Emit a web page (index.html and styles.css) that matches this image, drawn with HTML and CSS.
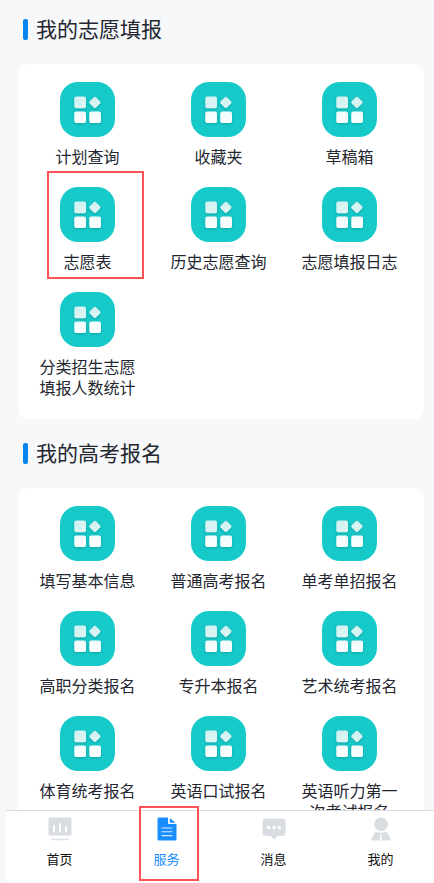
FILE: index.html
```
<!DOCTYPE html>
<html lang="zh-CN">
<head>
<meta charset="utf-8">
<meta name="viewport" content="width=device-width, initial-scale=1">
<title>服务</title>
<link rel="stylesheet" href="styles.css">
</head>
<body>
<svg class="defs" aria-hidden="true">
  <defs>
    <linearGradient id="soft" x1="0" y1="0" x2="1" y2="1">
      <stop offset="0" stop-color="#cdf0ef"/><stop offset="1" stop-color="#dff6f5"/>
    </linearGradient>
    <linearGradient id="bright" x1="0" y1="0" x2="0" y2="1">
      <stop offset="0" stop-color="#f0fbfb"/><stop offset="1" stop-color="#ffffff"/>
    </linearGradient>
    <filter id="shade" x="-20%" y="-20%" width="150%" height="150%">
      <feDropShadow dx="0" dy="1" stdDeviation="1.5" flood-color="#067f80" flood-opacity=".5"/>
    </filter>
    <symbol id="apps" viewBox="0 0 55 55">
      <rect width="55" height="55" rx="18" fill="#17caca"/>
      <g filter="url(#shade)">
        <rect x="14.3" y="14.5" width="11.7" height="11.7" rx="2" fill="url(#soft)"/>
        <rect x="30.5" y="16" width="8.8" height="8.8" rx="1.5" transform="rotate(45 34.9 20.4)" fill="url(#soft)"/>
        <rect x="14.3" y="29.4" width="11.7" height="11.7" rx="2" fill="url(#bright)"/>
        <rect x="29.3" y="29.4" width="11.7" height="11.7" rx="2" fill="url(#bright)"/>
      </g>
    </symbol>
  </defs>
</svg>
<main class="content">
  <section class="group">
    <h2 class="title">我的志愿填报</h2>
    <div class="card">
      <a class="item" href="#"><svg class="icon"><use href="#apps"/></svg><span class="label">计划查询</span></a>
      <a class="item" href="#"><svg class="icon"><use href="#apps"/></svg><span class="label">收藏夹</span></a>
      <a class="item" href="#"><svg class="icon"><use href="#apps"/></svg><span class="label">草稿箱</span></a>
      <a class="item marked" href="#"><svg class="icon"><use href="#apps"/></svg><span class="label">志愿表</span></a>
      <a class="item" href="#"><svg class="icon"><use href="#apps"/></svg><span class="label">历史志愿查询</span></a>
      <a class="item" href="#"><svg class="icon"><use href="#apps"/></svg><span class="label">志愿填报日志</span></a>
      <a class="item" href="#"><svg class="icon"><use href="#apps"/></svg><span class="label">分类招生志愿填报人数统计</span></a>
    </div>
  </section>
  <section class="group">
    <h2 class="title">我的高考报名</h2>
    <div class="card">
      <a class="item" href="#"><svg class="icon"><use href="#apps"/></svg><span class="label">填写基本信息</span></a>
      <a class="item" href="#"><svg class="icon"><use href="#apps"/></svg><span class="label">普通高考报名</span></a>
      <a class="item" href="#"><svg class="icon"><use href="#apps"/></svg><span class="label">单考单招报名</span></a>
      <a class="item" href="#"><svg class="icon"><use href="#apps"/></svg><span class="label">高职分类报名</span></a>
      <a class="item" href="#"><svg class="icon"><use href="#apps"/></svg><span class="label">专升本报名</span></a>
      <a class="item" href="#"><svg class="icon"><use href="#apps"/></svg><span class="label">艺术统考报名</span></a>
      <a class="item" href="#"><svg class="icon"><use href="#apps"/></svg><span class="label">体育统考报名</span></a>
      <a class="item" href="#"><svg class="icon"><use href="#apps"/></svg><span class="label">英语口试报名</span></a>
      <a class="item" href="#"><svg class="icon"><use href="#apps"/></svg><span class="label">英语听力第一次考试报名</span></a>
    </div>
  </section>
</main>
<nav class="tabs">
  <a class="tab" href="#">
    <svg class="tab-icon" viewBox="0 0 24 24">
      <rect x="0.5" y="0.5" width="23" height="18" rx="1.5" fill="#d9dde1"/>
      <path d="M6 9v5.500M12 7v7.500M18 10v4.500" stroke="#fff" stroke-width="2" stroke-linecap="round"/>
      <path d="M4 22.5h16" stroke="#d9dde1" stroke-width="1.6" stroke-linecap="round"/>
    </svg>
    <span class="tab-label">首页</span>
  </a>
  <a class="tab active" href="#" aria-current="page">
    <svg class="tab-icon" viewBox="0 0 24 24">
      <path d="M4 0.5h9v5.5q0 1 1 1h7.500v15q0 1.500-1.500 1.500h-16q-1.500 0-1.500-1.500v-20q0-1.500 1.500-1.500z" fill="#188dff"/>
      <path d="M14.800 1l5.700 4.700h-5.700z" fill="#188dff"/>
      <path d="M6.500 11h11M6.500 14.800h11M6.500 18.600h11" stroke="#d4e9ff" stroke-width="1.100"/>
    </svg>
    <span class="tab-label">服务</span>
  </a>
  <a class="tab" href="#">
    <svg class="tab-icon" viewBox="0 0 24 24">
      <path d="M3.500 1.500h17q3 0 3 3v11.500q0 3-3 3h-5l-3.500 3.500-3.500-3.500h-5q-3 0-3-3v-11.500q0-3 3-3z" fill="#d9dde1"/>
      <g fill="#fff"><circle cx="6.600" cy="10.500" r="1.700"/><circle cx="12" cy="10.500" r="1.700"/><circle cx="17.400" cy="10.500" r="1.700"/></g>
    </svg>
    <span class="tab-label">消息</span>
  </a>
  <a class="tab" href="#">
    <svg class="tab-icon" viewBox="0 0 24 24">
      <circle cx="12" cy="7.200" r="6.800" fill="#d9dde1"/>
      <path d="M6.500 14.500q5.500 2.500 11 0l4 7q.8 2-1 2h-17q-1.800 0-1-2z" fill="#d9dde1"/>
      <path d="M12 17.500v6" stroke="#fff" stroke-width="1.500"/>
    </svg>
    <span class="tab-label">我的</span>
  </a>
</nav>
</body>
</html>
```
FILE: styles.css
```
*,
*::before,
*::after {
  box-sizing: border-box;
}

body {
  display: flex;
  flex-direction: column;
  height: 100vh;
  margin: 0;
  padding-left: 6px;
  background: #f7f7f7;
  color: #23262f;
  font-family: "Noto Sans CJK SC", sans-serif;
}

a {
  color: inherit;
  text-decoration: none;
}

.defs {
  position: absolute;
  width: 0;
  height: 0;
}

.content {
  flex: 1;
  min-height: 0;
  overflow: hidden;
  padding: 19px 10px 0 12px;
  background: #f6f8fa;
}

.group {
  margin-bottom: 24px;
}

.title {
  display: flex;
  align-items: flex-start;
  gap: 8px;
  margin: 0 0 24px 5px;
  font-size: 21px;
  font-weight: 400;
  line-height: 18px;
}

.title::before {
  content: "";
  width: 5px;
  height: 21px;
  border-radius: 2px;
  background: #0486f0;
}

.card {
  display: grid;
  grid-template-columns: repeat(3, 1fr);
  row-gap: 20px;
  padding: 18px 9px 21px 4px;
  border-radius: 10px;
  background: #fff;
}

.item {
  position: relative;
  display: flex;
  flex-direction: column;
  align-items: center;
  gap: 9px;
}

.icon {
  width: 55px;
  height: 55px;
}

.label {
  max-width: 6em;
  font-size: 16px;
  line-height: 21px;
  text-align: center;
}

.tabs {
  display: grid;
  grid-template-columns: repeat(4, 1fr);
  height: 73px;
  border-top: 1px solid #dcdcdf;
  border-bottom: 3px solid #fcfcfc;
  background: #fff;
}

.tab {
  position: relative;
  display: flex;
  flex-direction: column;
  align-items: center;
  gap: 8px;
  padding-top: 6px;
  color: #111;
}

.tab.active {
  color: #188dff;
}

.tab-icon {
  width: 24px;
  height: 24px;
}

.tab-label {
  font-size: 13px;
  line-height: 20px;
}

.marked::after,
.active::after {
  content: "";
  position: absolute;
  border: 2px solid #fb5355;
}

.marked::after {
  top: -16px;
  left: 25px;
  width: 97px;
  height: 108px;
}

.active::after {
  top: -5px;
  left: 26px;
  width: 60px;
  height: 75px;
}
```
